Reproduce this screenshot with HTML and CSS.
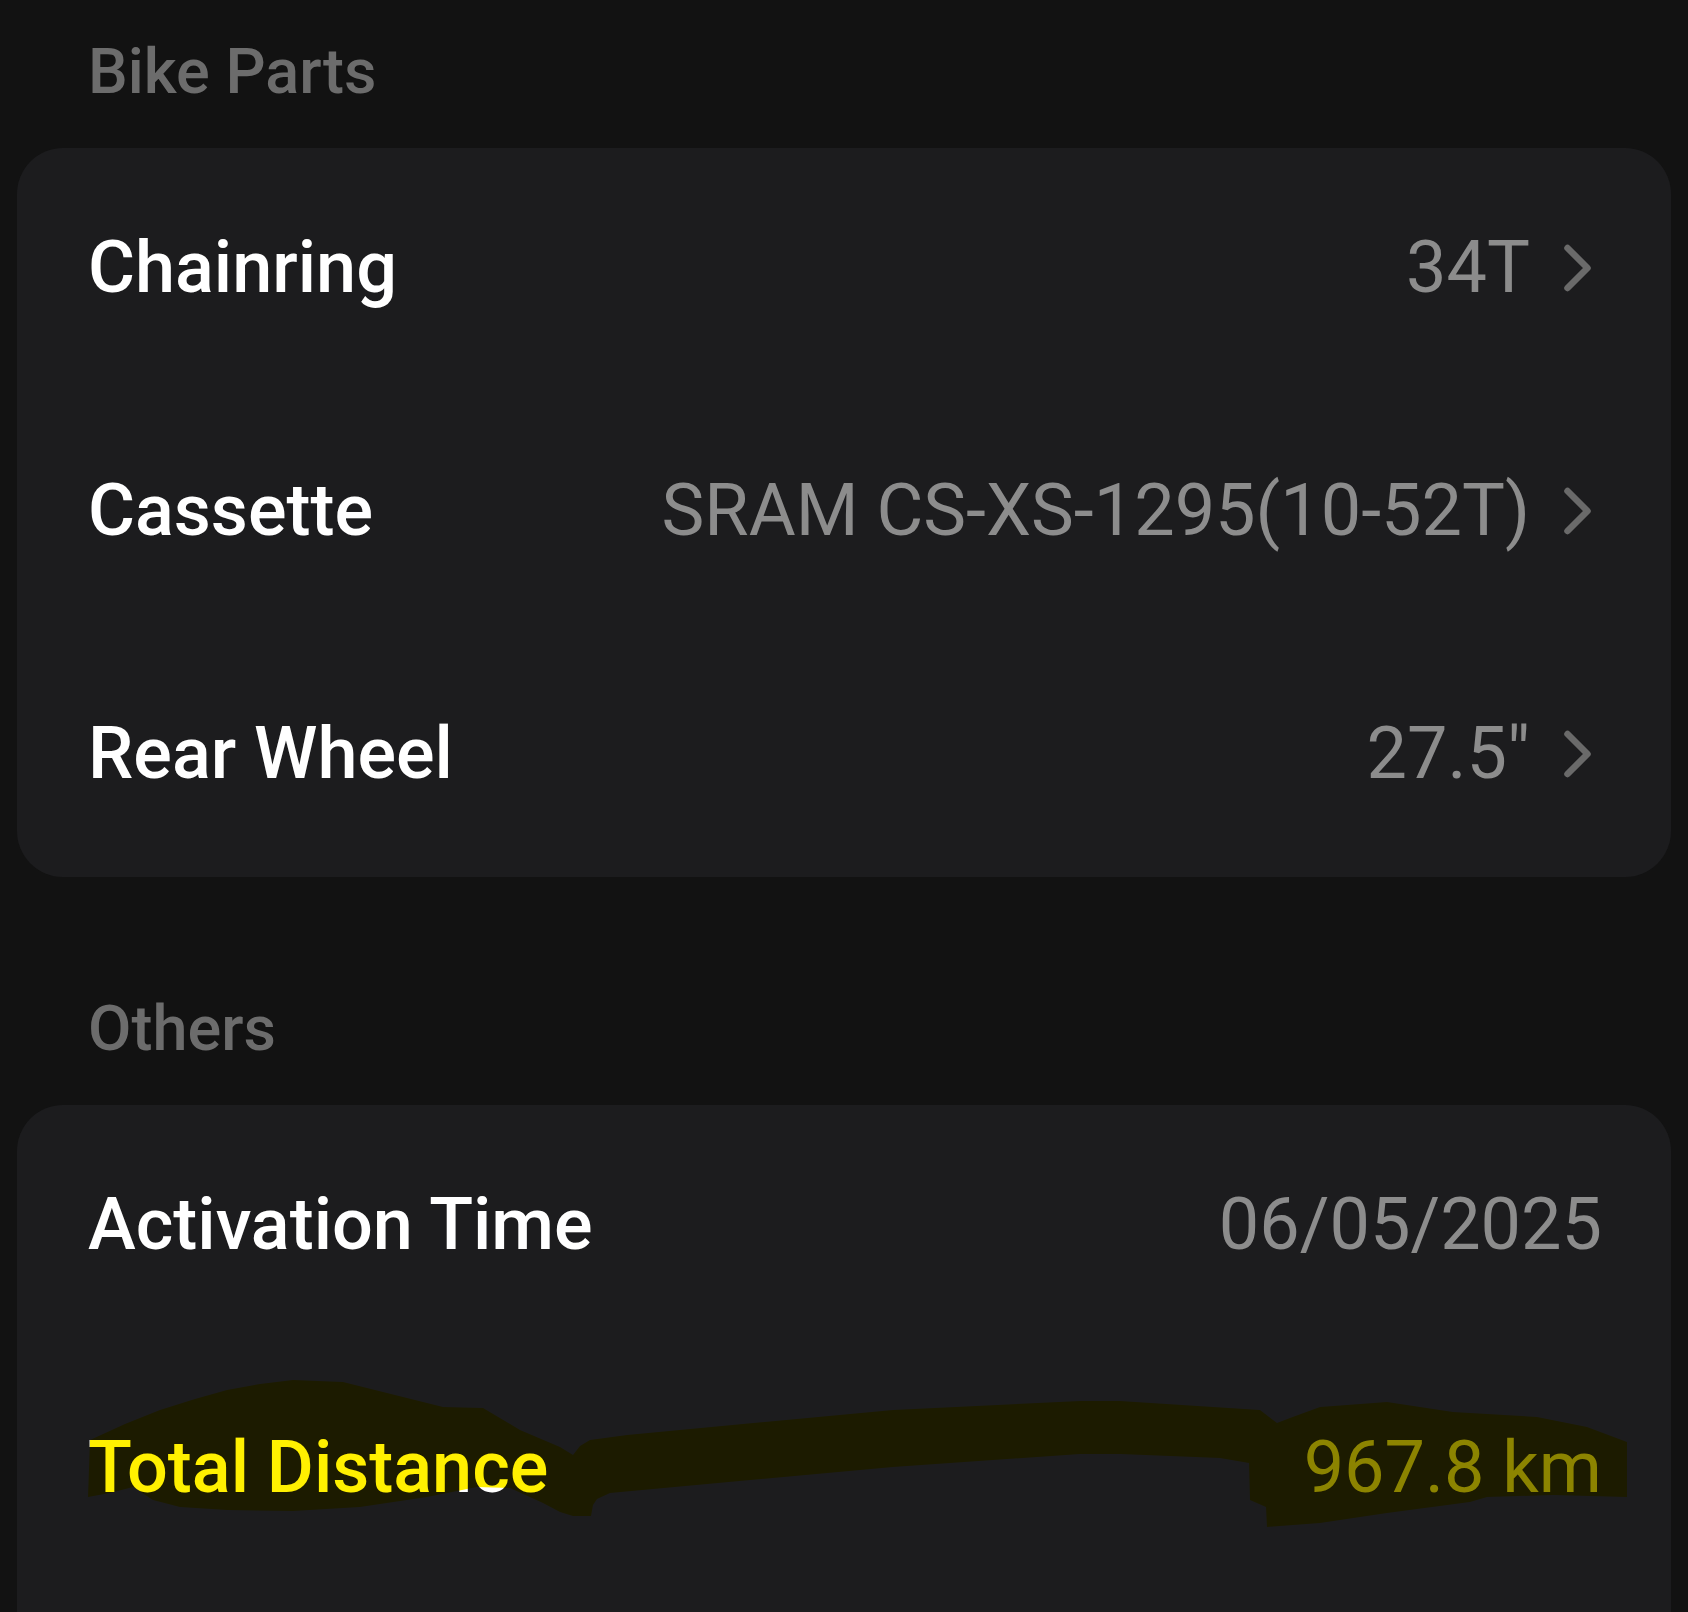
FILE: index.html
```html
<!DOCTYPE html>
<html lang="en">
<head>
    <meta charset="UTF-8">
    <title>Bike Details</title>
    <link rel="stylesheet" href="styles.css">
</head>
<body>
    <div class="page">
        <h2 class="section-title">Bike Parts</h2>
        <div class="card">
            <div class="row">
                <span class="label">Chainring</span>
                <span class="value">34T</span>
                <svg class="chevron" viewBox="0 0 38 48" width="38" height="48"><path d="M4.5 4 L24.5 24 L4.5 44"/></svg>
            </div>
            <div class="row">
                <span class="label">Cassette</span>
                <span class="value">SRAM CS-XS-1295(10-52T)</span>
                <svg class="chevron" viewBox="0 0 38 48" width="38" height="48"><path d="M4.5 4 L24.5 24 L4.5 44"/></svg>
            </div>
            <div class="row">
                <span class="label">Rear Wheel</span>
                <span class="value">27.5"</span>
                <svg class="chevron" viewBox="0 0 38 48" width="38" height="48"><path d="M4.5 4 L24.5 24 L4.5 44"/></svg>
            </div>
        </div>

        <h2 class="section-title others">Others</h2>
        <div class="card card-open">
            <div class="row">
                <span class="label">Activation Time</span>
                <span class="value">06/05/2025</span>
            </div>
            <div class="row">
                <span class="label">Total Distance</span>
                <span class="value">967.8 km</span>
                <!-- highlighter mark drawn over the row -->
                <svg class="marker" viewBox="0 0 1654 243" width="1654" height="243">
                    <g transform="translate(-17 -1348)">
                        <path d="M90 1440 L125 1424 L160 1410 L195 1399 L227 1390 L260 1384 L293 1380 L343 1382 L387 1393 L443 1407 L483 1408 L520 1430 L560 1447 L573 1455 L580 1446 L590 1440 L627 1435 L893 1410 L1080 1401 L1120 1401 L1260 1410 L1277 1423 L1290 1418 L1320 1407 L1387 1402 L1453 1412 L1537 1417 L1587 1427 L1627 1442 L1627 1497 L1553 1495 L1487 1497 L1470 1502 L1387 1513 L1320 1523 L1267 1527 L1266 1507 L1250 1500 L1249 1463 L1220 1458 L1120 1454 L1080 1454 L893 1467 L610 1493 L597 1499 L593 1505 L591 1516 L573 1516 L560 1512 L543 1503 L510 1488 L477 1487 L427 1497 L360 1507 L293 1511 L227 1510 L180 1507 L153 1500 L133 1487 L110 1493 L88 1497 Z"/>
                    </g>
                </svg>
            </div>
        </div>
    </div>
</body>
</html>
```

FILE: styles.css
```css
/* Base */
html,
body {
    margin: 0;
    padding: 0;
    overflow: hidden;
}

body {
    font-family: Roboto, 'Noto Sans', sans-serif;
    background-color: #121212;
}

.page {
    padding: 36px 17px 0;
}

/* Section headings */
.section-title {
    margin: 0 0 40px;
    padding-left: 71px;
    font-size: 63px;
    line-height: 72px;
    font-weight: 500;
    color: #6c6c6c;
}

.section-title.others {
    margin-top: 116px;
}

/* Cards */
.card {
    background-color: #1c1c1e;
    border-radius: 46px;
}

.card-open {
    padding-bottom: 120px;
    border-bottom-left-radius: 0;
    border-bottom-right-radius: 0;
}

.row {
    position: relative;
    height: 243px;
    box-sizing: border-box;
    padding: 0 69px 4px 71px;
    display: flex;
    align-items: center;
    font-size: 72px;
}

.label {
    flex: 1;
    font-weight: 500;
    color: #fff;
}

.value {
    color: #8c8c8c;
}

.chevron {
    margin-left: 33px;
    margin-right: 1px;
    fill: none;
    stroke: #6a6a6a;
    stroke-width: 6.5;
    stroke-linecap: round;
    stroke-linejoin: round;
}

/* Yellow highlighter over the distance row */
.marker {
    position: absolute;
    top: 0;
    left: 0;
    overflow: visible;
    mix-blend-mode: multiply;
    fill: #fff000;
}
```
